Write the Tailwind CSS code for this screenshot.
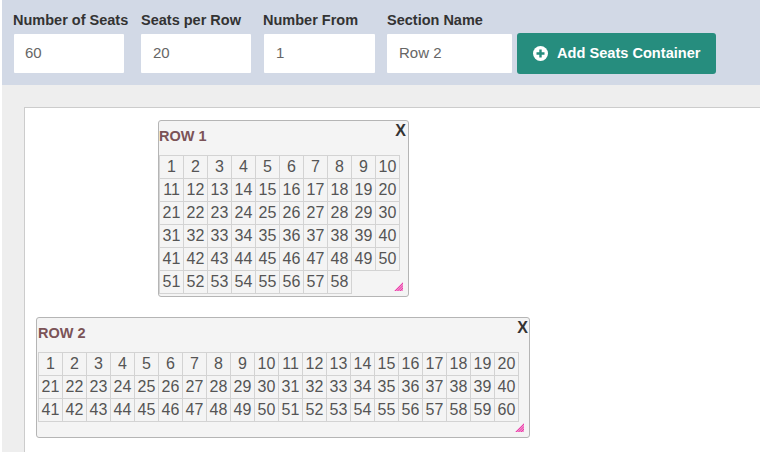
<!DOCTYPE html>
<html>
<head>
<meta charset="utf-8">
<script src="https://cdn.jsdelivr.net/npm/@tailwindcss/browser@4"></script>
</head>
<body class="bg-white font-['Liberation_Sans',Arial,sans-serif] text-[#333] overflow-hidden">
<div class="w-[760px] h-[452px] pl-[2px] overflow-hidden">
  <div class="h-[85px] bg-[#d2d9e6] flex items-start pl-[11px] pt-[11px]">
    <div class="w-[128px] shrink-0">
      <div class="text-[14.5px] leading-[18px] font-bold h-[23px] whitespace-nowrap">Number of Seats</div>
      <div class="ml-[1px] w-[110px] h-[39px] bg-white text-[15px] text-[#666] pl-[11px] flex items-center rounded-[1px]">60</div>
    </div>
    <div class="w-[123px] shrink-0">
      <div class="text-[14.5px] leading-[18px] font-bold h-[23px] whitespace-nowrap">Seats per Row</div>
      <div class="w-[110px] h-[39px] bg-white text-[15px] text-[#666] pl-[12px] flex items-center rounded-[1px]">20</div>
    </div>
    <div class="w-[123px] shrink-0">
      <div class="-ml-[1px] text-[14.5px] leading-[18px] font-bold h-[23px] whitespace-nowrap">Number From</div>
      <div class="w-[111px] h-[39px] bg-white text-[15px] text-[#666] pl-[12px] flex items-center rounded-[1px]">1</div>
    </div>
    <div class="w-[130px] shrink-0">
      <div class="text-[14.5px] leading-[18px] font-bold h-[23px] whitespace-nowrap">Section Name</div>
      <div class="w-[125px] h-[39px] bg-white text-[15px] text-[#666] pl-[12px] flex items-center rounded-[1px]">Row 2</div>
    </div>
    <button class="mt-[22px] w-[199px] h-[41px] bg-[#268d7e] rounded-[3px] text-white text-[14.6px] font-bold flex items-center pl-[16px] gap-[9px] whitespace-nowrap">
      <svg width="15" height="15" viewBox="0 0 15 15" class="shrink-0"><circle cx="7.5" cy="7.5" r="7.5" fill="#fff"/><path d="M7.5 3.5v8M3.5 7.5h8" stroke="#268d7e" stroke-width="2.4"/></svg>
      Add Seats Container
    </button>
  </div>
  <div class="h-[367px] bg-[#eeeeee] pl-[22px] pt-[22px]">
    <div class="relative w-[800px] h-[400px] bg-white border border-[#ccc]">

      <div class="absolute left-[133px] top-[12px] w-[251px] h-[177px] bg-[#f4f4f4] border border-[#b5b5b5] rounded-[3px]">
        <div class="absolute left-0 top-[6px] text-[14.5px] leading-[18px] font-bold text-[#7b5357]">ROW 1</div>
        <div class="absolute right-[2px] top-[1px] text-base leading-[18px] font-bold text-[#333]">X</div>
        <table class="absolute left-0 top-[34px] w-[241px] table-fixed border-collapse text-base leading-[22px] text-center text-[#555] [&_td]:border [&_td]:border-[#d3d3d3] [&_td]:p-0">
          <tbody>
            <tr><td>1</td><td>2</td><td>3</td><td>4</td><td>5</td><td>6</td><td>7</td><td>8</td><td>9</td><td>10</td></tr>
            <tr><td>11</td><td>12</td><td>13</td><td>14</td><td>15</td><td>16</td><td>17</td><td>18</td><td>19</td><td>20</td></tr>
            <tr><td>21</td><td>22</td><td>23</td><td>24</td><td>25</td><td>26</td><td>27</td><td>28</td><td>29</td><td>30</td></tr>
            <tr><td>31</td><td>32</td><td>33</td><td>34</td><td>35</td><td>36</td><td>37</td><td>38</td><td>39</td><td>40</td></tr>
            <tr><td>41</td><td>42</td><td>43</td><td>44</td><td>45</td><td>46</td><td>47</td><td>48</td><td>49</td><td>50</td></tr>
            <tr><td>51</td><td>52</td><td>53</td><td>54</td><td>55</td><td>56</td><td>57</td><td>58</td></tr>
          </tbody>
        </table>
        <svg class="absolute right-[5px] bottom-[5px]" width="9" height="9" viewBox="0 0 9 9"><path d="M0 9L9 0V9Z" fill="#f48ccc"/><path d="M1 9L9 1M3.5 9L9 3.5M6 9L9 6" stroke="#e83fa8" stroke-width="1"/></svg>
      </div>

      <div class="absolute left-[11px] top-[209px] w-[494px] h-[121px] bg-[#f4f4f4] border border-[#b5b5b5] rounded-[3px]">
        <div class="absolute left-[1px] top-[6px] text-[14.5px] leading-[18px] font-bold text-[#7b5357]">ROW 2</div>
        <div class="absolute right-[1px] top-[1px] text-base leading-[18px] font-bold text-[#333]">X</div>
        <table class="absolute left-[1px] top-[34px] w-[481px] table-fixed border-collapse text-base leading-[22px] text-center text-[#555] [&_td]:border [&_td]:border-[#d3d3d3] [&_td]:p-0">
          <tbody>
            <tr><td>1</td><td>2</td><td>3</td><td>4</td><td>5</td><td>6</td><td>7</td><td>8</td><td>9</td><td>10</td><td>11</td><td>12</td><td>13</td><td>14</td><td>15</td><td>16</td><td>17</td><td>18</td><td>19</td><td>20</td></tr>
            <tr><td>21</td><td>22</td><td>23</td><td>24</td><td>25</td><td>26</td><td>27</td><td>28</td><td>29</td><td>30</td><td>31</td><td>32</td><td>33</td><td>34</td><td>35</td><td>36</td><td>37</td><td>38</td><td>39</td><td>40</td></tr>
            <tr><td>41</td><td>42</td><td>43</td><td>44</td><td>45</td><td>46</td><td>47</td><td>48</td><td>49</td><td>50</td><td>51</td><td>52</td><td>53</td><td>54</td><td>55</td><td>56</td><td>57</td><td>58</td><td>59</td><td>60</td></tr>
          </tbody>
        </table>
        <svg class="absolute right-[5px] bottom-[5px]" width="9" height="9" viewBox="0 0 9 9"><path d="M0 9L9 0V9Z" fill="#f48ccc"/><path d="M1 9L9 1M3.5 9L9 3.5M6 9L9 6" stroke="#e83fa8" stroke-width="1"/></svg>
      </div>

    </div>
  </div>
</div>
</body>
</html>
